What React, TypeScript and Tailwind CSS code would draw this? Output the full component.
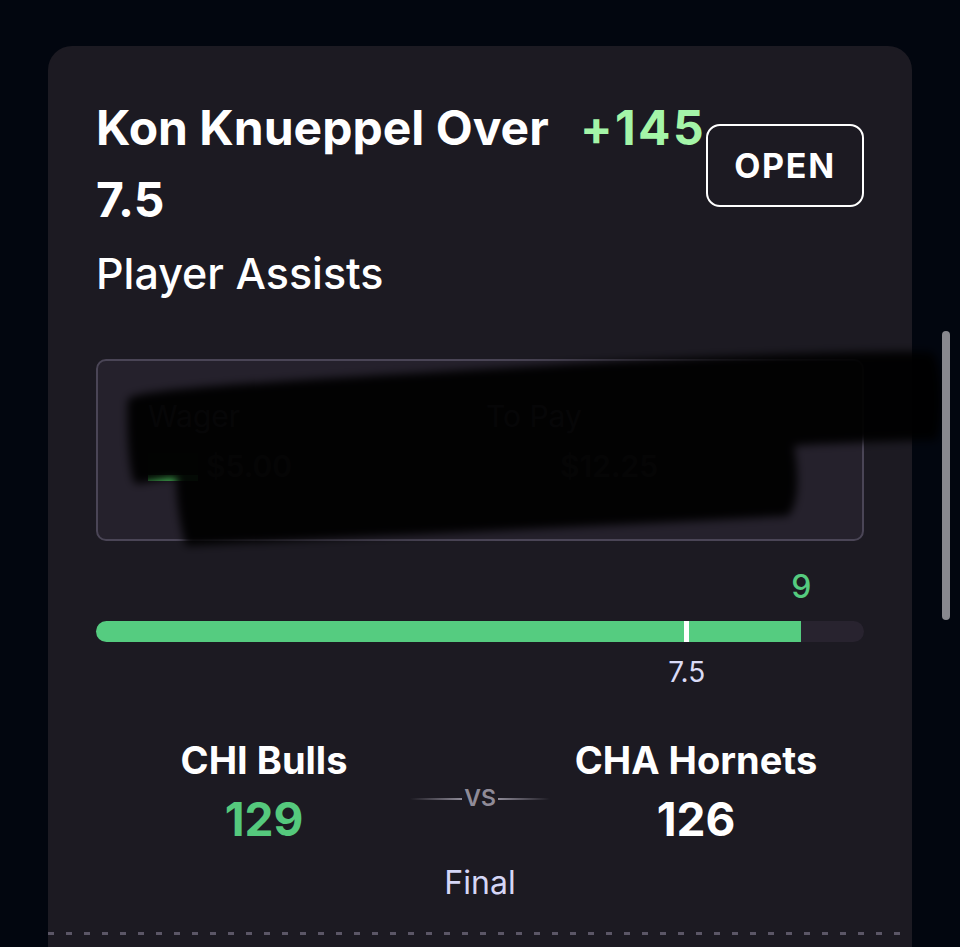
import React from 'react';

const bet = {
  player: 'Kon Knueppel',
  side: 'Over',
  line: '7.5',
  odds: '+145',
  market: 'Player Assists',
  actual: 9,
  max: 9.8,
};

// Redaction marker drawn on top of the wager box
function Redaction() {
  return (
    <svg
      className="pointer-events-none absolute left-0 top-0"
      width="960"
      height="947"
      viewBox="0 0 960 947"
    >
      <defs>
        <filter id="soft" x="-10%" y="-30%" width="120%" height="160%">
          <feGaussianBlur stdDeviation="4" />
        </filter>
      </defs>
      <g filter="url(#soft)" fill="#030206" fillOpacity="0.95">
        <path d="M128 400 C 128 388, 300 380, 600 362 C 760 354, 900 350, 930 352 C 944 354, 944 430, 936 440 C 800 444, 794 446, 794 446 C 800 480, 798 505, 788 516 C 600 526, 380 536, 186 546 C 178 520, 176 490, 176 478 C 160 480, 140 484, 136 484 C 128 480, 126 410, 128 400 Z" />
      </g>
    </svg>
  );
}

function WagerBox() {
  return (
    <div className="mt-[64px] h-[182px] rounded-[10px] border-2 border-[#4a4556] bg-[#25212c] px-[50px] pt-[40px]">
      <div className="grid grid-cols-2 text-[30px] leading-none text-[#7a7684]">
        <span>Wager</span>
        <span className="pl-[6px]">To Pay</span>
      </div>
      <div className="mt-[20px] grid grid-cols-2 text-[30px] font-semibold leading-none text-[#625e6b]">
        <div className="flex items-end gap-2">
          <span className="h-[28px] w-[50px] border-b-[6px] border-[#4cc35e] bg-[#1f3b25]" />
          <span>$5.00</span>
        </div>
        <span className="pl-[80px]">$12.25</span>
      </div>
    </div>
  );
}

function Progress() {
  const fill = (bet.actual / bet.max) * 100;
  const mark = (7.5 / bet.max) * 100;
  return (
    <div className="mt-[30px]">
      <div className="relative h-[40px]">
        <span
          className="absolute top-0 -translate-x-1/2 text-[32px] font-medium leading-none text-[#55cb7f]"
          style={{ left: `${fill}%` }}
        >
          9
        </span>
      </div>
      <div className="relative mt-[10px] h-[21px] rounded-full bg-[#28232f]">
        <div className="h-full rounded-l-full bg-[#55cc80]" style={{ width: `${fill}%` }} />
        <div className="absolute top-0 h-full w-[5px] bg-white" style={{ left: `${mark}%` }} />
      </div>
      <div className="relative h-[50px]">
        <span
          className="absolute top-[16px] -translate-x-1/2 text-[28px] leading-none text-[#d9dbf6]"
          style={{ left: `calc(${mark}% + 3px)` }}
        >
          7.5
        </span>
      </div>
    </div>
  );
}

function Matchup() {
  return (
    <div className="mt-[49px] grid grid-cols-[1fr_96px_1fr] items-center">
      <div className="flex flex-col items-center">
        <span className="text-[38px] font-bold leading-none text-white">CHI Bulls</span>
        <span className="mt-[17px] text-[46px] font-bold leading-none text-[#55c97d]">129</span>
      </div>
      <div className="mt-[14px] flex items-center justify-center">
        <span className="h-[2px] w-[52px] shrink-0 bg-gradient-to-r from-transparent to-[#8f8b98]" />
        <span className="shrink-0 px-[2px] text-[23px] font-semibold leading-none text-[#8f8b98]">VS</span>
        <span className="h-[2px] w-[52px] shrink-0 bg-gradient-to-l from-transparent to-[#8f8b98]" />
      </div>
      <div className="flex flex-col items-center">
        <span className="text-[38px] font-bold leading-none text-white">CHA Hornets</span>
        <span className="mt-[17px] text-[46px] font-bold leading-none text-white">126</span>
      </div>
    </div>
  );
}

export default function App() {
  return (
    <div
      className="relative h-[947px] w-[960px] overflow-hidden bg-[#02060f]"
      style={{ fontFamily: 'Inter, "Noto Sans", sans-serif' }}
    >
      <div className="ml-[48px] mt-[46px] w-[864px] rounded-t-[24px] bg-[#1c1a22] px-[48px] pb-[40px] pt-[46px]">
        <div className="flex items-start">
          <h1 className="min-w-0 flex-1 text-[48px] font-bold leading-[72px] text-white">
            {bet.player} {bet.side} {bet.line}
          </h1>
          <span className="ml-[22px] shrink-0 text-[48px] font-bold leading-[72px] tracking-[0.05em] text-[#a4f5a8]">
            {bet.odds}
          </span>
          <button
            type="button"
            className="mt-[32px] h-[83px] w-[158px] shrink-0 rounded-[14px] border-2 border-white text-[34px] font-bold tracking-[0.05em] text-white"
          >
            OPEN
          </button>
        </div>
        <div className="mt-[16px] text-[43px] font-medium leading-none text-white">{bet.market}</div>

        <WagerBox />
        <Progress />
        <Matchup />

        <div className="mt-[25px] text-center text-[32px] leading-none text-[#d5d6f6]">Final</div>
        <div className="mt-[33px] -mx-[48px] h-[3px] bg-[repeating-linear-gradient(to_right,#5b5666_0,#5b5666_6px,transparent_6px,transparent_18px)]" />
      </div>
      <Redaction />
      <div className="absolute left-[942px] top-[331px] h-[289px] w-[8px] rounded-full bg-[#88888e]" />
    </div>
  );
}
